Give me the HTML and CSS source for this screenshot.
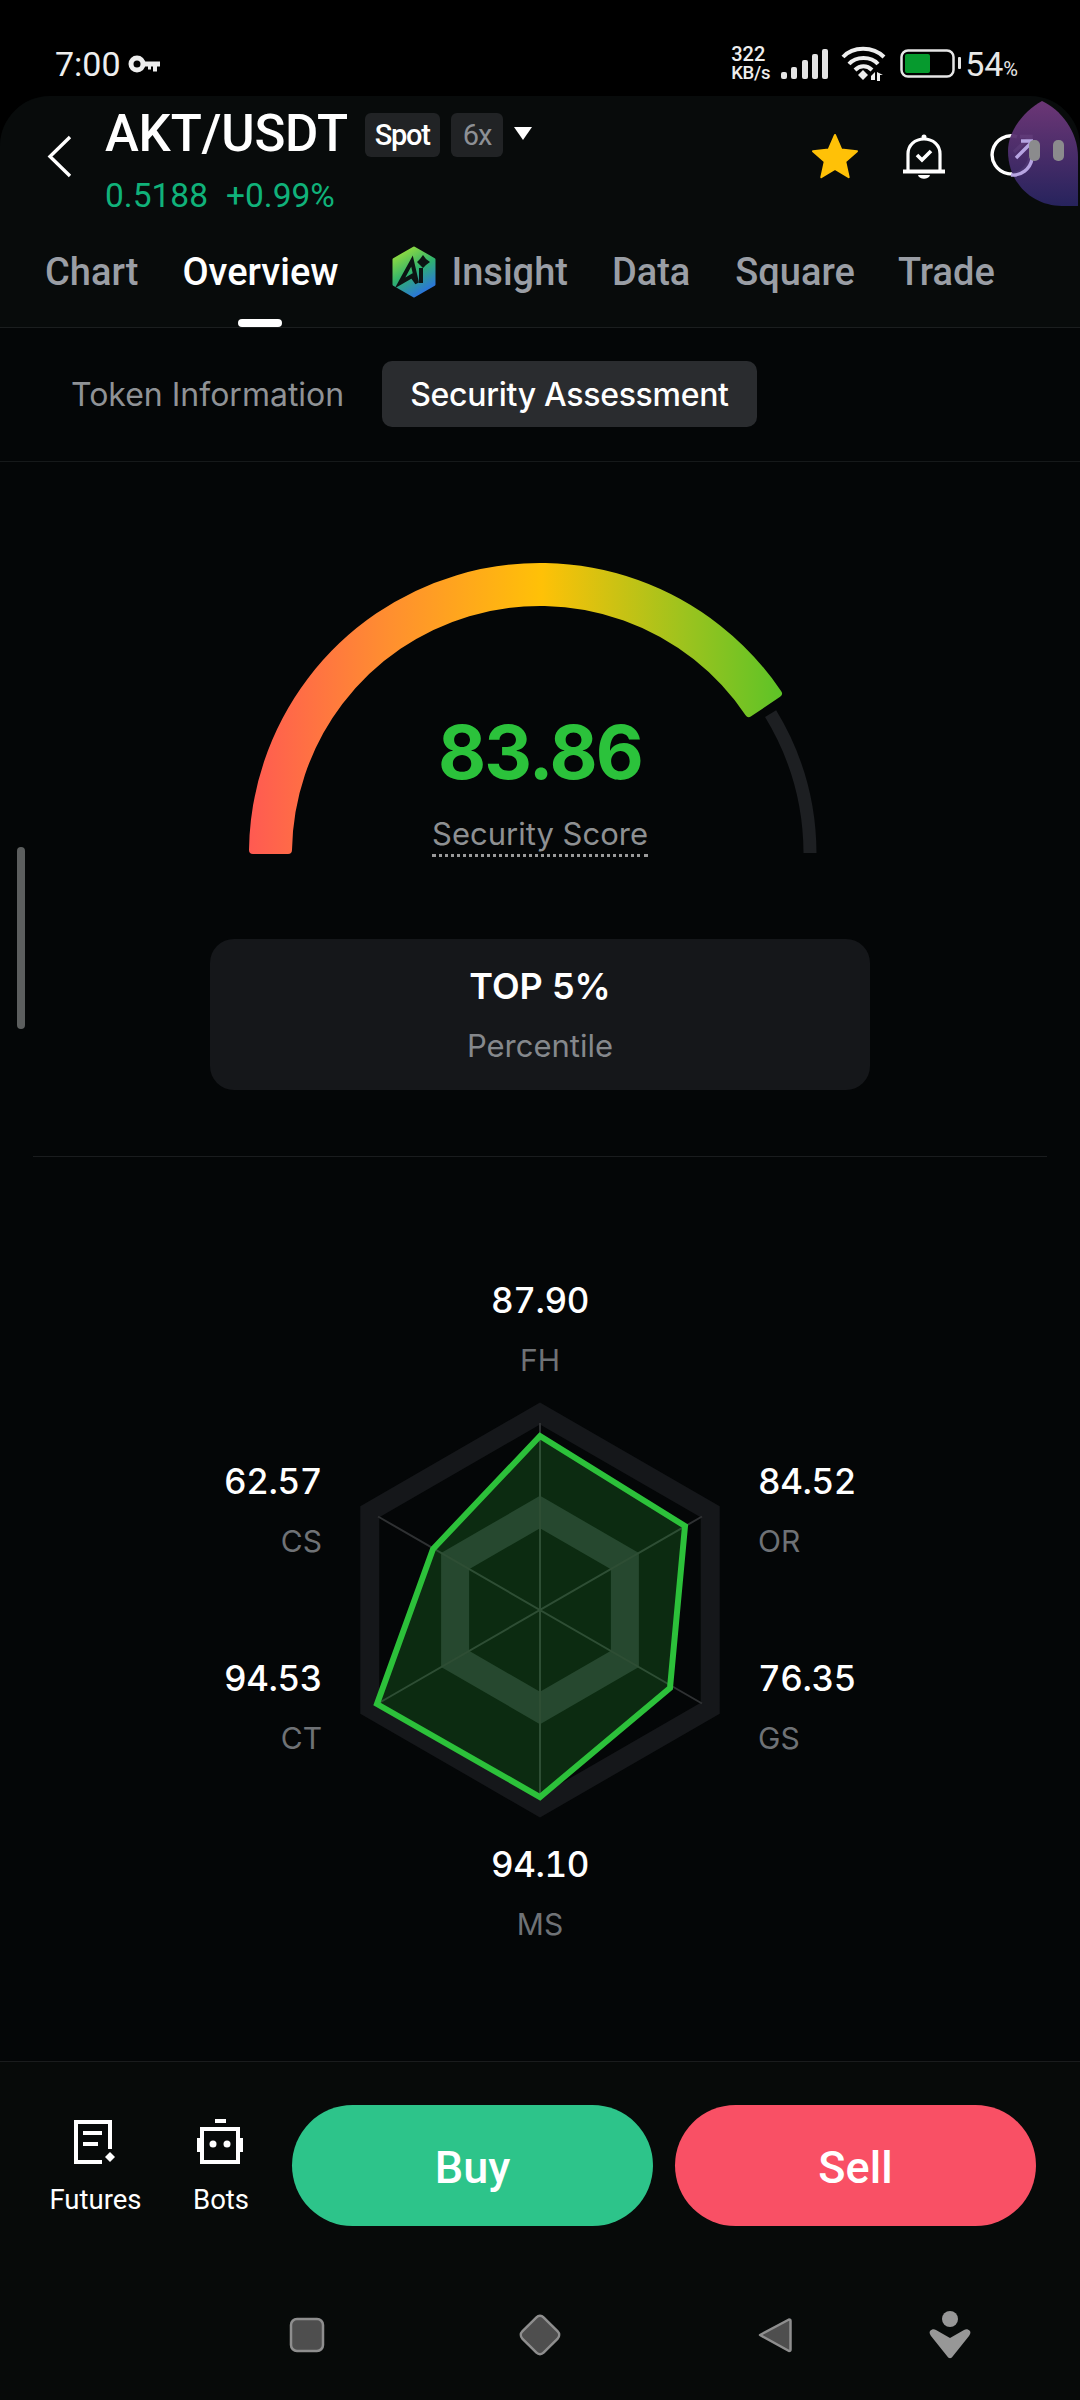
FILE: index.html
```html
<!DOCTYPE html>
<html lang="en">
<head>
<meta charset="utf-8">
<title>AKT/USDT Security Assessment</title>
<link rel="stylesheet" href="styles.css">
</head>
<body>
<div class="status">
  <span class="clock">7:00</span>
  <svg class="key" width="32" height="18" viewBox="0 0 32 18"><circle cx="9" cy="9" r="6" fill="none" stroke="#eee" stroke-width="5"/><path d="M14 6.500h18v5h-3v5h-4v-5h-2v3h-3v-3h-6z" fill="#eee"/></svg>
  <div class="status-right">
    <div class="speed"><span>322</span><span class="speed-unit">KB/s</span></div>
    <svg class="signal" width="48" height="32" viewBox="0 0 48 32"><g fill="#e4e4e4"><rect x="1" y="24" width="6" height="7" rx="2"/><rect x="11" y="19" width="6" height="12" rx="2"/><rect x="22" y="12" width="6" height="19" rx="2"/><rect x="32" y="6" width="6" height="25" rx="2"/><rect x="42" y="1" width="6" height="30" rx="2"/></g></svg>
    <svg class="wifi" width="46" height="36" viewBox="0 0 46 36"><g fill="none" stroke="#eee" stroke-width="4"><path d="M2 11C12 0 32 0 43 11"/><path d="M8 18C15 10 30 10 37 18"/><path d="M14 24C19 19 26 19 31 24"/></g><path d="M22 24l5 5-5 5-5-5z" fill="#eee"/><path d="M34 26v8h-4v-4zM36 26v9h3v-6h3z" fill="#eee"/></svg>
    <svg class="battery" width="62" height="30" viewBox="0 0 62 30"><rect x="1.500" y="1.500" width="52" height="26" rx="6.500" fill="none" stroke="#e6e6e6" stroke-width="2.500"/><rect x="5" y="5" width="25" height="19" rx="2" fill="#069a2e"/><rect x="58" y="8" width="3" height="12" rx="1" fill="#e6e6e6"/></svg>
    <span class="pct">54<small>%</small></span>
  </div>
</div>

<main class="app">
  <header class="head">
    <div class="titlebar">
      <svg class="back" width="25" height="43" viewBox="0 0 25 43"><path d="M23 2L3 21.500 23 41" fill="none" stroke="#fff" stroke-width="3.400"/></svg>
      <div class="title-col">
        <h1 class="pair">AKT/USDT</h1>
        <div class="quote"><span>0.5188</span><span>+0.99%</span></div>
      </div>
      <div class="badges">
        <span class="badge badge-on">Spot</span>
        <span class="badge badge-lev">6x</span>
        <svg class="caret" width="20" height="14" viewBox="0 0 20 14"><path d="M1 1h18l-9 13z" fill="#fff"/></svg>
      </div>
      <div class="actions">
        <svg class="fav" width="48" height="46" viewBox="0 0 48 46"><path d="M24 2l6.400 14.600 15.600 1.600-11.700 10.400 3.400 15.600L24 36l-13.700 8.200 3.400-15.600L2 18.200l15.600-1.600z" fill="#ffc107" stroke="#ffc107" stroke-width="2" stroke-linejoin="round"/></svg>
        <svg width="44" height="48" viewBox="0 0 44 48"><g fill="none" stroke="#fff" stroke-width="3.200"><path d="M6 38V21C6 12 13 6 22 6s16 6 16 15v17"/><path d="M1 38.500h42" stroke-width="4"/><path d="M15 22l5 5 9-9" stroke-width="3.600"/></g><circle cx="22" cy="4" r="2.500" fill="#fff"/><path d="M16 42h12c-1 5-11 5-12 0z" fill="#fff"/></svg>
        <svg width="44" height="44" viewBox="0 0 44 44"><g fill="none" stroke="#fff" stroke-width="3.400"><path d="M27 3.800A19 19 0 1 0 40 24"/><path d="M24 19L40 4M30 3.500h11V15"/></g></svg>
      </div>
    </div>
    <nav class="tabs">
      <span class="tab">Chart</span>
      <span class="tab tab-active">Overview</span>
      <span class="tab tab-ai">
        <svg width="48" height="52" viewBox="0 0 48 52"><defs><linearGradient id="aig" x1="0.2" y1="0" x2="0.7" y2="1"><stop offset="0" stop-color="#9be03a"/><stop offset="0.5" stop-color="#2fb26e"/><stop offset="1" stop-color="#2a6fe6"/></linearGradient></defs><path d="M24 2l20 11.500v25L24 50 4 38.500v-25z" fill="url(#aig)" stroke="url(#aig)" stroke-width="3" stroke-linejoin="round"/><path d="M10 37l12-22 5 22-5-7z" fill="none" stroke="#0c1413" stroke-width="4" stroke-linejoin="miter"/><path d="M31 22v15" stroke="#0c1413" stroke-width="4"/><path d="M33 9l3 4 4 3-4 3-3 3-3-3-3-3 3-3z" fill="#0c1413"/></svg>
        Insight
      </span>
      <span class="tab tab-data">Data</span>
      <span class="tab">Square</span>
      <span class="tab tab-trade">Trade</span>
    </nav>
  </header>

  <section class="subtabs">
    <span class="subtab">Token Information</span>
    <span class="subtab subtab-on">Security Assessment</span>
  </section>

  <section class="score">
    <div class="gauge">
      <svg width="600" height="310" viewBox="0 0 600 310">
        <defs><linearGradient id="gg" gradientUnits="userSpaceOnUse" x1="9" y1="0" x2="541" y2="0"><stop offset="0" stop-color="#ff5a52"/><stop offset="0.26" stop-color="#ff8e30"/><stop offset="0.55" stop-color="#ffc107"/><stop offset="0.82" stop-color="#9cc31e"/><stop offset="1" stop-color="#5ec327"/></linearGradient></defs>
        <path class="gauge-fill" d="M13 299A287 287 0 0 1 537.900 142.500L508.900 162A252 252 0 0 0 48 299Z"/>
        <path class="gauge-rest" d="M530.600 162.700A270 270 0 0 1 570 302"/>
      </svg>
      <div class="gauge-text">
        <div class="score-num">83.86</div>
        <div class="score-label">Security Score</div>
      </div>
    </div>
    <div class="rank">
      <div class="rank-top">TOP 5%</div>
      <div class="rank-sub">Percentile</div>
    </div>
  </section>

  <section class="radar-wrap">
    <div class="radar">
      <svg width="480" height="480" viewBox="-240 -240 480 480">
        <polygon class="ring" points="0,-196.500 170.200,-98.200 170.200,98.200 0,196.500 -170.200,98.200 -170.200,-98.200"/>
        <polygon class="ring-in" points="0,-98 84.900,-49 84.900,49 0,98 -84.900,49 -84.900,-49"/>
        <path class="axes" d="M0 -187V187M-162 -93.500L162 93.500M-162 93.500L162 -93.500"/>
        <polygon class="shape" points="0,-174 145,-84 130,78 0,187 -163,94 -107,-61"/>
      </svg>
      <div class="metric m-fh"><b>87.90</b><span>FH</span></div>
      <div class="metric m-or"><b>84.52</b><span>OR</span></div>
      <div class="metric m-gs"><b>76.35</b><span>GS</span></div>
      <div class="metric m-ms"><b>94.10</b><span>MS</span></div>
      <div class="metric m-ct"><b>94.53</b><span>CT</span></div>
      <div class="metric m-cs"><b>62.57</b><span>CS</span></div>
    </div>
  </section>

  <footer class="foot">
    <div class="actionbar">
      <div class="tool">
        <svg width="44" height="46" viewBox="0 0 44 46"><g fill="none" stroke="#fff" stroke-width="4"><path d="M37 30V3H3v40h26"/><path d="M10 14h19M10 25h15"/></g><path d="M37 33l5 5-5 5-5-5z" fill="#fff"/></svg>
        <span>Futures</span>
      </div>
      <div class="tool tool-bots">
        <svg width="46" height="46" viewBox="0 0 46 46"><g fill="none" stroke="#fff" stroke-width="4"><rect x="5" y="10" width="36" height="33"/></g><rect x="18" y="0" width="11" height="4" fill="#fff"/><rect x="0" y="19" width="3" height="14" fill="#fff"/><rect x="43" y="19" width="3" height="14" fill="#fff"/><circle cx="16" cy="25" r="3.500" fill="#fff"/><circle cx="30" cy="25" r="3.500" fill="#fff"/></svg>
        <span>Bots</span>
      </div>
      <button class="trade trade-buy">Buy</button>
      <button class="trade trade-sell">Sell</button>
    </div>
    <div class="sysnav">
      <svg width="36" height="36" viewBox="0 0 36 36"><rect x="2" y="2" width="32" height="32" rx="6" fill="#4e4e4e" stroke="#8e8e8e" stroke-width="2.500"/></svg>
      <svg class="nav-home" width="46" height="46" viewBox="0 0 46 46"><rect x="8" y="8" width="30" height="30" rx="5" transform="rotate(45 23 23)" fill="#4e4e4e" stroke="#8e8e8e" stroke-width="2.500"/></svg>
      <svg class="nav-back" width="36" height="38" viewBox="0 0 36 38"><path d="M32 3.500L3 19l29 16c1 0 1.500-.5 1.500-1.500V5c0-1-.5-1.500-1.500-1.500z" fill="#4e4e4e" stroke="#8e8e8e" stroke-width="2.500" stroke-linejoin="round"/></svg>
      <svg class="nav-person" width="46" height="48" viewBox="0 0 46 48"><circle cx="23" cy="8" r="8" fill="#979797"/><path d="M3 20c2-2 4-2 6-1l14 8 14-8c2-1 4-1 6 1 1 2 0 3-1 5L26 45c-2 3-4 3-6 0L4 25c-1-2-2-3-1-5z" fill="#979797"/></svg>
    </div>
  </footer>
</main>

<div class="scrollbar"></div>
<svg class="floater" width="72" height="106" viewBox="0 0 72 106">
  <defs><linearGradient id="fg" x1="0" y1="0" x2="0" y2="1"><stop offset="0" stop-color="#70387a"/><stop offset="1" stop-color="#282460"/></linearGradient></defs>
  <path d="M34 0C52 8 70 30 70 56V105H54C24 105 0 82 0 50 0 30 16 10 34 0Z" fill="url(#fg)" fill-opacity="0.96"/>
  <path d="M3 74A19.500 19.500 0 0 0 24 58M8 57L23 42M13 40h12" fill="none" stroke="#b7a5e2" stroke-width="3.400"/>
  <rect x="21" y="39" width="11" height="21" rx="5" fill="#8b8b8d"/>
  <rect x="45" y="39" width="11" height="21" rx="5" fill="#8b8b8d"/>
</svg>
</body>
</html>
```

FILE: styles.css
```css
* { box-sizing: border-box; margin: 0; padding: 0; }

html, body { width: 1080px; height: 2400px; overflow: hidden; }

body {
  position: relative;
  display: flex;
  flex-direction: column;
  background: #000;
  color: #fff;
  font-family: Roboto, sans-serif;
}

svg { display: block; flex: none; }

/* status bar */
.status {
  height: 96px;
  flex: none;
  display: flex;
  align-items: flex-start;
  padding: 44px 0 0 55px;
}
.clock { font-size: 34px; line-height: 40px; color: #eee; }
.key { margin: 11px 0 0 7px; }
.status-right { margin-left: auto; display: flex; align-items: flex-start; }
.speed {
  display: flex;
  flex-direction: column;
  margin: 1px 0 0 0;
  font-size: 20px;
  line-height: 19px;
  font-weight: 500;
  color: #eee;
}
.speed-unit { font-size: 18.500px; letter-spacing: -0.300px; }
.signal { margin: 4px 0 0 10px; }
.wifi { margin: 2px 0 0 13px; }
.battery { margin: 5px 0 0 13px; }
.pct { font-size: 34px; line-height: 40px; color: #e8e8e8; margin: 0 62px 0 3px; }
.pct small { font-size: 20px; }

/* app frame */
.app {
  flex: 1;
  display: flex;
  flex-direction: column;
  background: #040607;
  border-radius: 50px 50px 0 0;
  overflow: hidden;
}

.head { height: 232px; flex: none; background: #080b0b; border-bottom: 1px solid #1b1e1f; }
.titlebar { height: 120px; display: flex; align-items: flex-start; padding-left: 47px; }
.back { margin-top: 39px; }
.title-col { margin-left: 33px; }
.pair { font-size: 51px; line-height: 50px; font-weight: 500; margin-top: 13px; letter-spacing: -0.200px; }
.quote { display: flex; gap: 18px; margin-top: 17px; font-size: 33.500px; line-height: 40px; color: #10b27a; }
.badges { display: flex; align-items: center; gap: 11px; margin: 17px 0 0 17px; height: 44px; }
.badge {
  height: 44px;
  padding: 0 10px;
  display: flex;
  align-items: center;
  font-size: 29px;
  letter-spacing: -1px;
  color: #8d9095;
  background: #212325;
  border-radius: 6px;
}
.badge-lev { padding: 0 12px; }
.badge-on { color: #fff; font-weight: 500; letter-spacing: -1.300px; }
.caret { margin: 0 0 4px -1px; }
.actions { margin-left: auto; margin-top: 37px; display: flex; align-items: flex-start; gap: 44px; padding-right: 46px; }
.fav { margin-right: -1px; }

.tabs { display: flex; gap: 45px; padding: 33px 0 0 45px; }
.tab {
  position: relative;
  display: flex;
  align-items: center;
  height: 46px;
  font-size: 38px;
  font-weight: 500;
  color: #9a9ea5;
}
.tab-ai svg { margin: 0 13px 0 7px; }
.tab-active { color: #fff; margin-left: -1px; }
.tab-data { margin-left: -1px; }
.tab-trade { margin-left: -2px; }
.tab-active::after {
  content: "";
  position: absolute;
  left: 56px;
  top: 70px;
  width: 44px;
  height: 8px;
  border-radius: 4px;
  background: #fff;
}

/* sub tabs */
.subtabs {
  height: 134px;
  flex: none;
  display: flex;
  align-items: center;
  gap: 38px;
  padding: 0 0 1px 71px;
  border-bottom: 1px solid #16191a;
  font-family: Inter, sans-serif;
  font-size: 32px;
  color: #8f9296;
}
.subtab-on {
  display: flex;
  align-items: center;
  height: 66px;
  padding: 0 28px;
  border-radius: 10px;
  background: #2a2c2f;
  color: #fff;
  font-weight: 500;
  letter-spacing: -0.300px;
}

/* score */
.score {
  height: 695px;
  flex: none;
  display: flex;
  flex-direction: column;
  align-items: center;
  margin: 0 33px;
  border-bottom: 1px solid #1a1c1e;
  font-family: Inter, sans-serif;
}
.gauge { position: relative; width: 600px; height: 310px; margin-top: 89px; }
.gauge-fill { fill: url(#gg); stroke: url(#gg); stroke-width: 8; stroke-linejoin: round; }
.gauge-rest { fill: none; stroke: #1d1f22; stroke-width: 13; }
.gauge-text { position: absolute; left: 0; right: 0; top: 156px; text-align: center; }
.score-num { font-size: 74px; line-height: 90px; font-weight: 700; letter-spacing: -1.800px; color: #2bc23b; }
.score-label {
  display: inline-block;
  margin-top: 18px;
  padding: 0 0 1px;
  font-size: 31px;
  line-height: 38px;
  color: #8e9092;
  border-bottom: 3px dotted #9a9a9a;
}
.rank {
  width: 660px;
  height: 151px;
  margin-top: 78px;
  padding-top: 25px;
  border-radius: 24px;
  background: #15171a;
  text-align: center;
}
.rank-top { font-size: 36px; line-height: 44px; font-weight: 600; }
.rank-sub { margin-top: 16px; font-size: 31px; line-height: 44px; color: #85888c; }

/* radar */
.radar-wrap { flex: 1; display: flex; justify-content: center; align-items: flex-start; font-family: Inter, sans-serif; }
.radar {
  position: relative;
  width: 480px;
  height: 480px;
  margin-top: 213px;
}
.ring { fill: none; stroke: #15171a; stroke-width: 19; stroke-linejoin: miter; }
.ring-in { fill: none; stroke: #252a2c; stroke-width: 28; stroke-linejoin: miter; }
.axes { fill: none; stroke: #2f3133; stroke-width: 2; }
.shape { fill: rgba(44, 193, 58, 0.2); stroke: #2cc13a; stroke-width: 6; stroke-linejoin: miter; }

.metric { position: absolute; display: flex; flex-direction: column; gap: 16px; width: 140px; }
.metric b { font-size: 35px; line-height: 44px; font-weight: 500; letter-spacing: -0.400px; font-variant-numeric: tabular-nums; color: #fff; }
.metric span { font-size: 30px; line-height: 44px; color: #6f7276; }
.m-fh, .m-ms { left: 170px; align-items: center; }
.m-fh { top: -92px; }
.m-ms { top: 472px; }
.m-or, .m-gs { left: 458px; align-items: flex-start; }
.m-or { top: 89px; }
.m-gs { top: 286px; }
.m-ct, .m-cs { left: -118px; align-items: flex-end; }
.m-cs { top: 89px; }
.m-ct { top: 286px; }

/* footer */
.foot { height: 339px; flex: none; background: #070a09; border-top: 1px solid #1a1c1d; }
.actionbar { display: flex; align-items: flex-start; height: 165px; padding: 43px 44px 0 52px; }
.tool { width: 85px; display: flex; flex-direction: column; align-items: center; padding-top: 14px; font-size: 27.500px; line-height: 34px; color: #fff; }
.tool span { padding-left: 2px; }
.tool svg { margin-bottom: 18px; }
.tool-bots { margin-left: 57px; width: 52px; }
.trade {
  height: 121px;
  flex: 1;
  border: 0;
  border-radius: 61px;
  padding-top: 4px;
  font-family: Roboto, sans-serif;
  font-size: 45px;
  font-weight: 500;
  color: #fff;
}
.trade-buy { background: #2dc48a; margin: 0 22px 0 46px; }
.trade-sell { background: #f95065; }
.sysnav { display: flex; align-items: center; padding: 84px 0 0 289px; }
.nav-home { margin-left: 192px; }
.nav-back { margin-left: 194px; }
.nav-person { margin-left: 134px; }

/* overlays */
.scrollbar { position: absolute; left: 17px; top: 847px; width: 8px; height: 182px; border-radius: 4px; background: #5c5e5e; }
.floater { position: absolute; left: 1008px; top: 101px; }
```
